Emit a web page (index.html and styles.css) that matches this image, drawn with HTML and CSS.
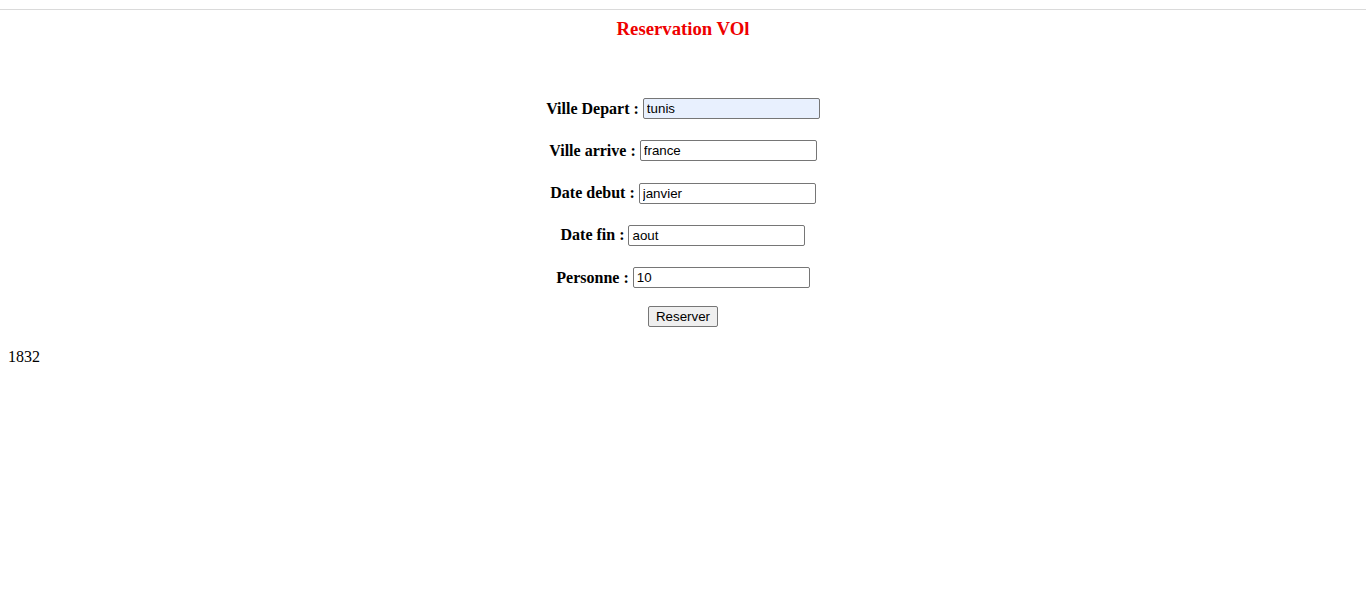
FILE: index.html
```html
<!DOCTYPE html>
<html lang="fr">
<head>
<meta charset="utf-8">
<title>Reservation VOl</title>
<link rel="stylesheet" href="styles.css">
</head>
<body>
<div class="topbar"></div>
<h3 class="title">Reservation VOl</h3>
<form class="form">
  <div class="row"><label class="lbl">Ville Depart :</label><input class="field autofill" type="text" value="tunis"></div>
  <div class="row"><label class="lbl">Ville arrive :</label><input class="field" type="text" value="france"></div>
  <div class="row"><label class="lbl">Date debut :</label><input class="field" type="text" value="janvier"></div>
  <div class="row"><label class="lbl">Date fin :</label><input class="field" type="text" value="aout"></div>
  <div class="row"><label class="lbl">Personne :</label><input class="field" type="text" value="10"></div>
  <button class="btn" type="button">Reserver</button>
</form>
<div class="result">1832</div>
</body>
</html>
```

FILE: styles.css
```css
html, body {
  margin: 0;
  padding: 0;
  background: #ffffff;
}
body {
  font-family: "Liberation Serif", "Times New Roman", serif;
  font-size: 16px;
  color: #000;
}
.topbar {
  height: 9px;
  border-bottom: 1px solid #dadada;
}
.title {
  margin: 8px 0 0 0;
  font-size: 18.72px;
  font-weight: bold;
  color: #ee0000;
  text-align: center;
  line-height: 21px;
}
.form {
  margin: 59px 0 0 0;
  display: flex;
  flex-direction: column;
  align-items: center;
  gap: 21.3px;
}
.row {
  display: flex;
  align-items: center;
  gap: 4px;
}
.lbl {
  font-weight: bold;
  font-size: 16px;
  line-height: 18px;
}
.field {
  box-sizing: border-box;
  width: 177px;
  height: 21px;
  margin: 0;
  padding: 1px 3px;
  border: 1px solid #767676;
  border-radius: 2px;
  font-family: "Liberation Sans", Arial, sans-serif;
  font-size: 13.333px;
  color: #000;
  background: #fff;
  outline: none;
}
.autofill {
  background: #e8f0fe;
}
.btn {
  box-sizing: border-box;
  margin-top: -3.6px;
  height: 21px;
  padding: 1px 7px;
  border: 1px solid #767676;
  border-radius: 2px;
  background: #efefef;
  font-family: "Liberation Sans", Arial, sans-serif;
  font-size: 13.333px;
  color: #000;
}
.result {
  margin-top: 21px;
  padding-left: 8px;
  line-height: 18px;
}
```
